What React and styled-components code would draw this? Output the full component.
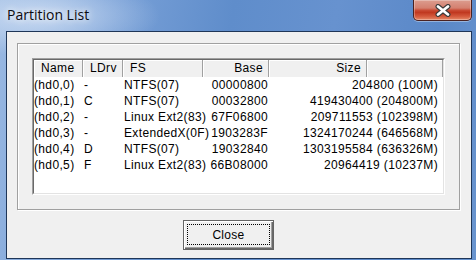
import React from 'react';
import styled, { createGlobalStyle } from 'styled-components';

const GlobalStyle = createGlobalStyle`
  html, body { margin: 0; padding: 0; }
  body {
    width: 476px;
    height: 260px;
    overflow: hidden;
    background: #5f8bc8;
    font-family: "Liberation Sans", Arial, sans-serif;
  }
  * { box-sizing: border-box; }
`;

const Window = styled.div`
  width: 476px;
  height: 260px;
  display: flex;
  flex-direction: column;
  background:
    radial-gradient(ellipse 120px 40px at 40px 16px, rgba(220, 232, 248, 0.75), rgba(220, 232, 248, 0) 100%),
    linear-gradient(100deg, #9ab9e2 0%, #7ba2d8 20%, #5f8dcb 45%, #6792cf 65%, #5a88c8 85%, #6a95cf 100%);
`;

const TitleBar = styled.div`
  height: 31px;
  display: flex;
  align-items: flex-start;
  padding: 0 4px 0 7px;
`;

const Title = styled.span`
  font-family: "Open Sans", "Noto Sans", sans-serif;
  font-size: 14px;
  line-height: 30px;
  color: #0b0b10;
  text-shadow: 0 0 6px rgba(255, 255, 255, 0.9), 0 0 10px rgba(255, 255, 255, 0.6);
`;

const CloseBox = styled.div`
  margin-left: auto;
  width: 59px;
  height: 21px;
  display: flex;
  align-items: center;
  justify-content: center;
  border: 1px solid #4b2220;
  border-top: none;
  border-radius: 0 0 5px 5px;
  background: linear-gradient(
    to bottom,
    #dc9d8f 0%,
    #d4806f 40%,
    #c94a33 52%,
    #c03820 62%,
    #d45a3d 82%,
    #e68a69 100%
  );
  box-shadow: inset 0 0 0 1px rgba(255, 255, 255, 0.3), 0 1px 0 rgba(255, 255, 255, 0.35);
`;

const Frame = styled.div`
  flex: 1;
  display: flex;
  padding: 0 4px 1px 6px;
`;

const Client = styled.div`
  flex: 1;
  display: flex;
  flex-direction: column;
  border: 1px solid #1f3658;
  background: #f0f0f0;
  padding: 11px 11px 8px 10px;
`;

const GroupBox = styled.div`
  width: 443px;
  height: 167px;
  display: flex;
  border: 1px solid #a0a0a0;
  box-shadow: inset 1px 1px 0 #fff, 1px 1px 0 #fff;
  padding: 14px;
`;

const Sunken = styled.div`
  flex: 1;
  display: flex;
  border: 1px solid;
  border-color: #a0a0a0 #fff #fff #a0a0a0;
`;

const ListBox = styled.div`
  flex: 1;
  display: flex;
  flex-direction: column;
  border: 1px solid;
  border-color: #696969 #e3e3e3 #e3e3e3 #696969;
  background: #fff;
  font-size: 12px;
  letter-spacing: 0.35px;
  color: #000;
  overflow: hidden;
`;

const Header = styled.div`
  display: flex;
  height: 17px;
  background: #f0f0f0;
`;

const HeaderCell = styled.div`
  width: ${p => (p.$w ? `${p.$w}px` : 'auto')};
  flex: ${p => (p.$w ? 'none' : 1)};
  text-align: ${p => p.$align || 'left'};
  padding: 0 5px 0 7px;
  line-height: 17px;
  border-right: 1px solid #a0a0a0;
  box-shadow: inset 1px 1px 0 #fff;
  white-space: nowrap;
`;

const Row = styled.div`
  display: grid;
  grid-template-columns: 50px 40px 80px 64px 170px 1fr;
  height: 16px;
  line-height: 16px;
  white-space: nowrap;
`;

const Cell = styled.div`
  text-align: ${p => (p.$right ? 'right' : 'left')};
  overflow: visible;
`;

const Footer = styled.div`
  display: flex;
  margin-top: 10px;
  padding-left: 166px;
`;

const PushButton = styled.button`
  width: 91px;
  height: 30px;
  display: flex;
  padding: 3px 3px 4px 3px;
  border: 1px solid #646464;
  background: #f0f0f0;
  box-shadow: inset 1px 1px 0 #fff, inset -1px -1px 0 #696969, inset -2px -2px 0 #a0a0a0;
  font-family: "Liberation Sans", Arial, sans-serif;
  font-size: 12px;
  letter-spacing: 0.3px;
  color: #000;
  cursor: pointer;
`;

const FocusRing = styled.span`
  flex: 1;
  display: flex;
  align-items: center;
  justify-content: center;
  border: 1px dotted #000;
`;

const partitions = [
  ['(hd0,0)', '-', 'NTFS(07)', '00000800', '204800 (100M)'],
  ['(hd0,1)', 'C', 'NTFS(07)', '00032800', '419430400 (204800M)'],
  ['(hd0,2)', '-', 'Linux Ext2(83)', '67F06800', '209711553 (102398M)'],
  ['(hd0,3)', '-', 'ExtendedX(0F)', '1903283F', '1324170244 (646568M)'],
  ['(hd0,4)', 'D', 'NTFS(07)', '19032840', '1303195584 (636326M)'],
  ['(hd0,5)', 'F', 'Linux Ext2(83)', '66B08000', '20964419 (10237M)'],
];

const CloseGlyph = () => (
  <svg width="16" height="13" viewBox="0 0 16 13">
    <path d="M3 2.5 L13 10.5 M13 2.5 L3 10.5" stroke="#3a3a3a" strokeWidth="5" strokeLinecap="round" fill="none" />
    <path d="M3 2.5 L13 10.5 M13 2.5 L3 10.5" stroke="#fff" strokeWidth="2.8" strokeLinecap="round" fill="none" />
  </svg>
);

export default function App() {
  return (
    <>
      <GlobalStyle />
      <Window>
        <TitleBar>
          <Title>Partition List</Title>
          <CloseBox><CloseGlyph /></CloseBox>
        </TitleBar>
        <Frame>
          <Client>
            <GroupBox>
              <Sunken>
                <ListBox>
                  <Header>
                    <HeaderCell $w={49}>Name</HeaderCell>
                    <HeaderCell $w={40}>LDrv</HeaderCell>
                    <HeaderCell $w={80}>FS</HeaderCell>
                    <HeaderCell $w={66} $align="right">Base</HeaderCell>
                    <HeaderCell $w={98} $align="right">Size</HeaderCell>
                    <HeaderCell />
                  </Header>
                  {partitions.map(p => (
                    <Row key={p[0]}>
                      <Cell>{p[0]}</Cell>
                      <Cell>{p[1]}</Cell>
                      <Cell>{p[2]}</Cell>
                      <Cell $right>{p[3]}</Cell>
                      <Cell $right>{p[4]}</Cell>
                      <Cell />
                    </Row>
                  ))}
                </ListBox>
              </Sunken>
            </GroupBox>
            <Footer>
              <PushButton type="button">
                <FocusRing>Close</FocusRing>
              </PushButton>
            </Footer>
          </Client>
        </Frame>
      </Window>
    </>
  );
}
